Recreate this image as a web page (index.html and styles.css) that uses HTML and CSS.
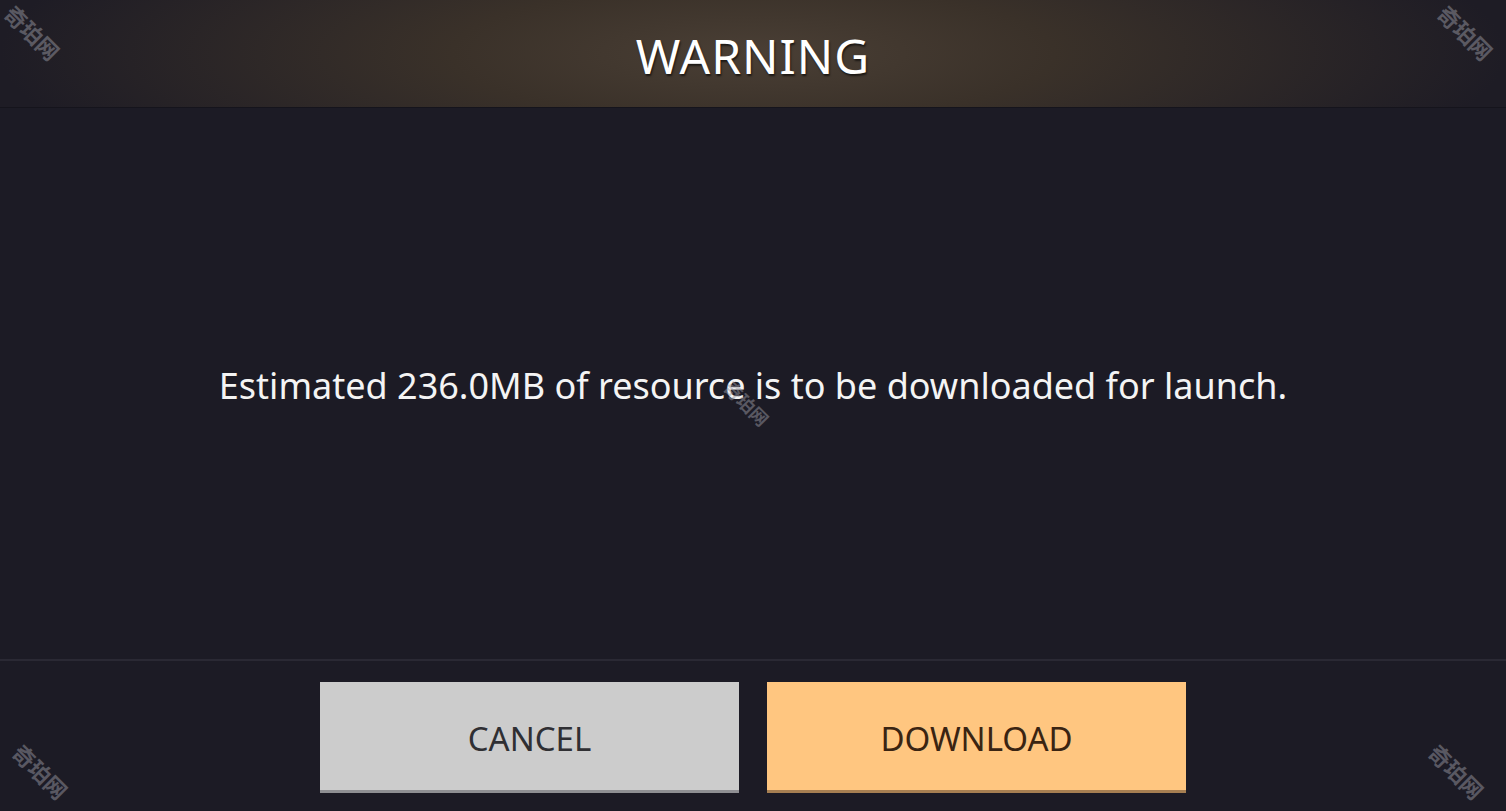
FILE: index.html
```html
<!DOCTYPE html>
<html>
  <head>
    <title>Warning</title>
    <link rel="stylesheet" href="styles.css">
  </head>
  <body>
    <div class="dialog">
      <div class="header">
        <h1>WARNING</h1>
      </div>

      <div class="message">
        <p>Estimated 236.0MB of resource is to be downloaded for launch.</p>
      </div>

      <div class="actions">
        <button class="btn cancel">CANCEL</button>
        <button class="btn download">DOWNLOAD</button>
      </div>
    </div>

    <div class="mark mark-tl">奇珀网</div>
    <div class="mark mark-tr">奇珀网</div>
    <div class="mark mark-mid">奇珀网</div>
    <div class="mark mark-bl">奇珀网</div>
    <div class="mark mark-br">奇珀网</div>
  </body>
</html>
```

FILE: styles.css
```css
html,
body {
  margin: 0;
  height: 100%;
  overflow: hidden;
}
body {
  font-family: "Noto Sans", "Open Sans", sans-serif;
  background-color: #1c1b25;
  color: #f2f2f2;
}
.dialog {
  display: flex;
  flex-direction: column;
  height: 811px;
}
.header {
  height: 107px;
  display: flex;
  align-items: center;
  justify-content: center;
  background: radial-gradient(ellipse 50% 160% at 50% 50%, #4a3f35 0%, #3a3129 40%, #1e1c25 100%);
  border-bottom: 1px solid #15141c;
}
.header h1 {
  margin: 0;
  padding-top: 4px;
  font-size: 48px;
  font-weight: 400;
  letter-spacing: 1px;
  color: #ffffff;
  text-shadow: 1px 2px 2px rgba(0, 0, 0, 0.6);
}
.message {
  flex: 1;
  display: flex;
  align-items: center;
  justify-content: center;
  border-bottom: 2px solid #2a2934;
}
.message p {
  margin: 0;
  padding-top: 4px;
  font-size: 36px;
  color: #f4f4f4;
}
.actions {
  height: 150px;
  display: flex;
  justify-content: center;
  align-items: flex-start;
  gap: 28px;
  padding-top: 21px;
  box-sizing: border-box;
}
.btn {
  width: 419px;
  height: 111px;
  border: none;
  font-family: "Noto Sans", "Open Sans", sans-serif;
  font-size: 33px;
  padding: 4px 0 0;
}
.cancel {
  background-color: #cccccc;
  color: #2f2f33;
  border-bottom: 3px solid #8f8f93;
}
.download {
  background-color: #ffc680;
  color: #3a2412;
  border-bottom: 3px solid #a67f52;
}
.mark {
  position: absolute;
  font-size: 22px;
  font-weight: 700;
  color: rgba(150, 150, 160, 0.5);
  transform: rotate(45deg);
  font-family: "Noto Sans CJK SC", sans-serif;
}
.mark-tl {
  left: 0;
  top: 16px;
}
.mark-tr {
  left: 1433px;
  top: 16px;
}
.mark-mid {
  left: 720px;
  top: 390px;
  font-size: 18px;
}
.mark-bl {
  left: 8px;
  top: 755px;
}
.mark-br {
  left: 1424px;
  top: 755px;
}
```
